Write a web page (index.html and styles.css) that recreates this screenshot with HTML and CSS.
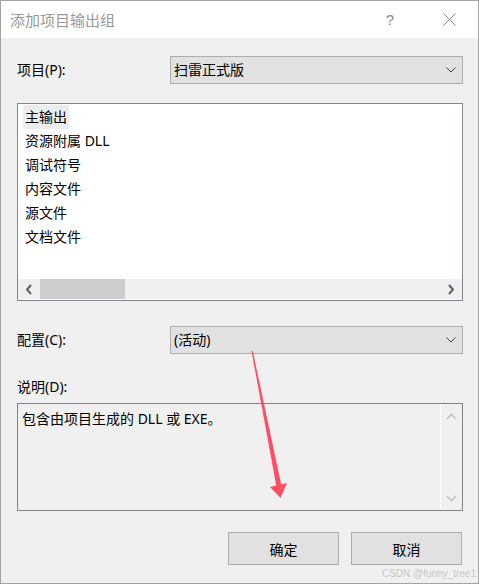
FILE: index.html
```html
<!DOCTYPE html>
<html lang="zh-CN">
<head>
<meta charset="utf-8">
<title>添加项目输出组</title>
<link rel="stylesheet" href="styles.css">
</head>
<body>
<div class="window">
  <div class="titlebar">
    <span class="title">添加项目输出组</span>
    <span class="help">?</span>
    <svg class="close" width="13" height="13" viewBox="0 0 13 13"><path d="M0.5 0.5L12.5 12.5M12.5 0.5L0.5 12.5" stroke="#8a8a8a" stroke-width="1" fill="none"/></svg>
  </div>
  <div class="content">
    <div class="field-row">
      <span class="label">项目(P):</span>
      <div class="combo">
        <span>扫雷正式版</span>
        <svg class="chev" width="10" height="6" viewBox="0 0 10 6"><path d="M0.5 0.5L5 5L9.5 0.5" stroke="#404040" fill="none"/></svg>
      </div>
    </div>

    <div class="listbox">
      <ul class="items">
        <li><span class="sel">主输出</span></li>
        <li><span>资源附属 DLL</span></li>
        <li><span>调试符号</span></li>
        <li><span>内容文件</span></li>
        <li><span>源文件</span></li>
        <li><span>文档文件</span></li>
      </ul>
      <div class="hscroll">
        <svg class="arr" width="8" height="11" viewBox="0 0 8 11"><path d="M6 1L2 5.5L6 10" stroke="#606060" stroke-width="2" fill="none"/></svg>
        <div class="track"><div class="thumb"></div></div>
        <svg class="arr" width="8" height="11" viewBox="0 0 8 11"><path d="M2 1L6 5.5L2 10" stroke="#606060" stroke-width="2" fill="none"/></svg>
      </div>
    </div>

    <div class="field-row row2">
      <span class="label">配置(C):</span>
      <div class="combo">
        <span>(活动)</span>
        <svg class="chev" width="10" height="6" viewBox="0 0 10 6"><path d="M0.5 0.5L5 5L9.5 0.5" stroke="#404040" fill="none"/></svg>
      </div>
    </div>

    <div class="desc-label">说明(D):</div>
    <div class="descbox">
      <div class="desc-text">包含由项目生成的 DLL 或 EXE。</div>
      <div class="vscroll">
        <svg width="11" height="7" viewBox="0 0 11 7"><path d="M1 6L5.5 1.5L10 6" stroke="#c4c4c4" stroke-width="1.6" fill="none"/></svg>
        <svg width="11" height="7" viewBox="0 0 11 7"><path d="M1 1L5.5 5.5L10 1" stroke="#c4c4c4" stroke-width="1.6" fill="none"/></svg>
      </div>
    </div>

    <div class="buttons">
      <button class="btn">确定</button>
      <button class="btn">取消</button>
    </div>
  </div>

  <svg class="annot" width="479" height="584" viewBox="0 0 479 584">
    <polygon points="251.5,351 252.8,351 281.5,486 276.5,487" fill="#ff4d68"/>
    <polygon points="270,487 287,483 280.5,498" fill="#ff4d68"/>
  </svg>
  <div class="watermark">CSDN @funny_tree1</div>
</div>
</body>
</html>
```

FILE: styles.css
```css
* { box-sizing: border-box; }
html, body { margin: 0; padding: 0; }
body {
  width: 479px;
  height: 584px;
  font-family: "Noto Sans", "Noto Sans CJK SC", sans-serif;
  font-size: 14px;
  color: #000;
  background: #f0f0f0;
}
.window {
  position: relative;
  width: 479px;
  height: 584px;
  border: 1px solid #a3a3a3;
  background: #f0f0f0;
  overflow: hidden;
}
.titlebar {
  height: 37px;
  background: #fff;
  display: flex;
  align-items: center;
  padding-left: 9px;
}
.title {
  font-size: 15px;
  color: #999;
  flex: 1;
}
.help {
  font-family: "Liberation Sans", sans-serif;
  font-size: 15px;
  color: #8a8a8a;
  margin-right: 49px;
}
.close {
  margin-right: 22px;
}
.content {
  padding: 18px 15px 0 16px;
}
.field-row {
  display: grid;
  grid-template-columns: 153px 1fr;
  align-items: center;
  height: 28px;
}
.label { line-height: 20px; }
.combo {
  height: 28px;
  border: 1px solid #adadad;
  background: #e1e1e1;
  display: flex;
  align-items: center;
  padding: 0 5px 0 3px;
  line-height: 20px;
}
.combo span { flex: 1; }
.chev { margin-right: 1px; }
.listbox {
  margin-top: 19px;
  height: 198px;
  border: 1px solid #828790;
  background: #fff;
  display: flex;
  flex-direction: column;
}
.items {
  list-style: none;
  margin: 0;
  padding: 1px 0 0 5px;
  flex: 1;
}
.items li {
  height: 24px;
  line-height: 24px;
}
.items li span {
  display: inline-block;
  padding: 0 2px;
}
.items li span.sel { background: #ececec; }
.hscroll {
  height: 20px;
  margin-bottom: 1px;
  background: #f0f0f0;
  display: flex;
  align-items: center;
}
.hscroll .arr { flex: none; margin: 0 8px 0 7px; }
.hscroll .arr:last-child { margin: 0 7px 0 8px; }
.track {
  flex: 1;
  height: 20px;
  margin-left: -1px;
}
.thumb {
  width: 85px;
  height: 20px;
  background: #cdcdcd;
}
.row2 { margin-top: 25px; }
.desc-label {
  margin-top: 23px;
  line-height: 20px;
}
.descbox {
  margin-top: 6px;
  height: 108px;
  border: 1px solid #828282;
  background: #f0f0f0;
  display: flex;
}
.desc-text {
  flex: 1;
  padding: 3px 0 0 4px;
  line-height: 24px;
}
.vscroll {
  width: 22px;
  border-left: 1px solid #fff;
  display: flex;
  flex-direction: column;
  justify-content: space-between;
  align-items: center;
  padding: 9px 0 8px;
}
.buttons {
  margin-top: 21px;
  display: flex;
  justify-content: flex-end;
  gap: 12px;
  padding-right: 1px;
}
.btn {
  width: 111px;
  height: 33px;
  border: 1px solid #adadad;
  background: #e1e1e1;
  font-family: "Noto Sans CJK SC", sans-serif;
  font-size: 14px;
  color: #000;
  padding: 0;
}
.annot {
  position: absolute;
  left: -1px;
  top: -1px;
  pointer-events: none;
}
.watermark {
  position: absolute;
  right: 2px;
  bottom: 4px;
  font-family: "Liberation Sans", sans-serif;
  font-size: 10px;
  color: #c8c8c8;
}
```
